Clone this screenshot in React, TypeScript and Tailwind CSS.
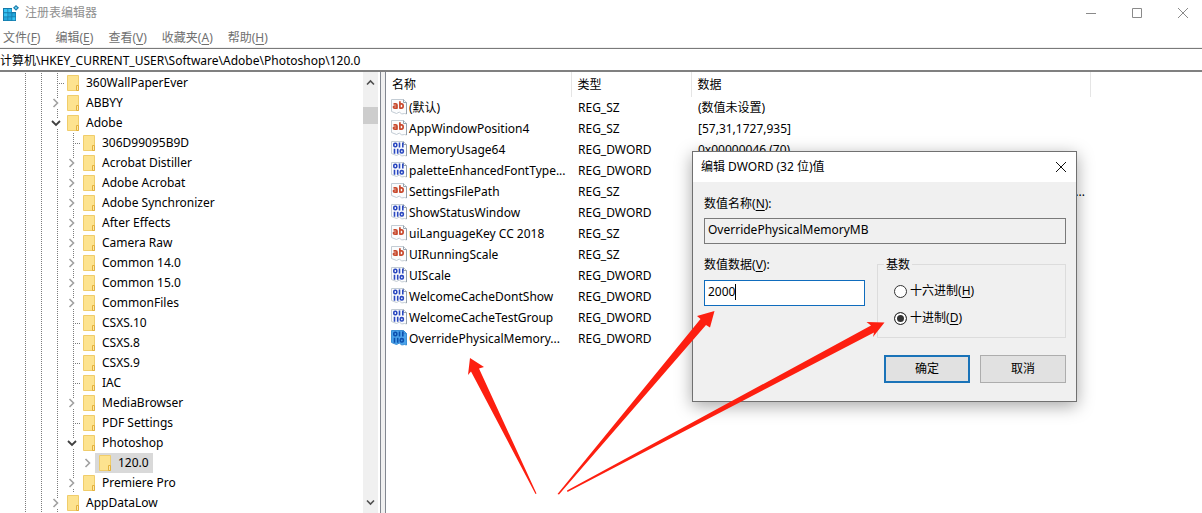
import React, { useState } from 'react';

interface TreeNode {
  label: string;
  depth: number;
  state?: 'open' | 'closed';
  selected?: boolean;
}

interface RegistryValue {
  name: string;
  type: 'REG_SZ' | 'REG_DWORD';
  data: string;
  selected?: boolean;
  clipped?: boolean;
}

const menus = [
  { label: '文件', accessKey: 'F' },
  { label: '编辑', accessKey: 'E' },
  { label: '查看', accessKey: 'V' },
  { label: '收藏夹', accessKey: 'A' },
  { label: '帮助', accessKey: 'H' },
];

const tree: TreeNode[] = [
  { label: '360WallPaperEver', depth: 2 },
  { label: 'ABBYY', depth: 2, state: 'closed' },
  { label: 'Adobe', depth: 2, state: 'open' },
  { label: '306D99095B9D', depth: 3 },
  { label: 'Acrobat Distiller', depth: 3, state: 'closed' },
  { label: 'Adobe Acrobat', depth: 3, state: 'closed' },
  { label: 'Adobe Synchronizer', depth: 3, state: 'closed' },
  { label: 'After Effects', depth: 3, state: 'closed' },
  { label: 'Camera Raw', depth: 3, state: 'closed' },
  { label: 'Common 14.0', depth: 3, state: 'closed' },
  { label: 'Common 15.0', depth: 3, state: 'closed' },
  { label: 'CommonFiles', depth: 3, state: 'closed' },
  { label: 'CSXS.10', depth: 3 },
  { label: 'CSXS.8', depth: 3 },
  { label: 'CSXS.9', depth: 3 },
  { label: 'IAC', depth: 3 },
  { label: 'MediaBrowser', depth: 3, state: 'closed' },
  { label: 'PDF Settings', depth: 3 },
  { label: 'Photoshop', depth: 3, state: 'open' },
  { label: '120.0', depth: 4, state: 'closed', selected: true },
  { label: 'Premiere Pro', depth: 3, state: 'closed' },
  { label: 'AppDataLow', depth: 2, state: 'closed' },
];

const values: RegistryValue[] = [
  { name: '(默认)', type: 'REG_SZ', data: '(数值未设置)' },
  { name: 'AppWindowPosition4', type: 'REG_SZ', data: '[57,31,1727,935]' },
  { name: 'MemoryUsage64', type: 'REG_DWORD', data: '0x00000046 (70)' },
  { name: 'paletteEnhancedFontType...', type: 'REG_DWORD', data: '' },
  { name: 'SettingsFilePath', type: 'REG_SZ', data: '...', clipped: true },
  { name: 'ShowStatusWindow', type: 'REG_DWORD', data: '' },
  { name: 'uiLanguageKey CC 2018', type: 'REG_SZ', data: '' },
  { name: 'UIRunningScale', type: 'REG_SZ', data: '' },
  { name: 'UIScale', type: 'REG_DWORD', data: '' },
  { name: 'WelcomeCacheDontShow', type: 'REG_DWORD', data: '' },
  { name: 'WelcomeCacheTestGroup', type: 'REG_DWORD', data: '' },
  { name: 'OverridePhysicalMemory...', type: 'REG_DWORD', data: '', selected: true },
];

const AppIcon = () => (
  <svg width="16" height="16" viewBox="0 0 16 16" aria-hidden="true">
    <path d="M0 3h9v4h4v9H0z" fill="#1578a8" />
    <path d="M1 4h3.500v3.300H1zM5.200 4h3.300v3.300H5.200zM1 8.200h3.500v3.200H1zM9.300 12.200h3v3h-3z" fill="#35c3f3" />
    <path d="M5.200 8.200h3.300v3.200H5.200zM9.300 8.200h3v3.200h-3zM1 12.200h3.500v3H1zM5.200 12.200h3.300v3H5.200z" fill="#22a7dc" />
    <path d="M13 0l3 2.800-3 3-3-3z" fill="#1b7cab" />
    <path d="M13 1.500l1.300 1.300L13 4.200l-1.400-1.400z" fill="#6fd5f7" />
  </svg>
);

const FolderIcon = () => (
  <svg className="shrink-0" width="14" height="18" viewBox="0 0 14 18" aria-hidden="true">
    <path d="M1.500 1.500h11v15h-11z" fill="#fde38f" stroke="#f0cd6b" />
    <path d="M10.500 11.500h2v5h-2z" fill="#fde9a8" stroke="#e3b13c" />
  </svg>
);

const ValueIcon = ({ type, selected }: { type: RegistryValue['type']; selected?: boolean }) => (
  <svg className="-mt-0.5 shrink-0" width="16" height="16" viewBox="0 0 16 16" aria-hidden="true">
    <path
      d="M.5.5h12l3 3v11.500l-2-.5-3 .5-2-2-3 1.500-5-2z"
      fill={selected ? '#4ba3ea' : '#fbfcfd'}
      stroke={selected ? '#3a8fd6' : '#c3ccd4'}
    />
    <path d="M12.500.5v3h3v11.500" fill="none" stroke={selected ? '#3a8fd6' : '#98a3ad'} />
    {type === 'REG_SZ' ? (
      <g fill="none" stroke="#c8492d" strokeWidth="1.700">
        <path d="M2.500 4.800h2.200c1 0 1.300.5 1.300 1.300v3.700M6 7H3.800C2 7 2 9.200 3.800 9.200H6" />
        <path d="M8.900 2.200v7.600M8.900 4.900h1.600c2.200 0 2.200 4.200 0 4.200H8.900" />
      </g>
    ) : (
      <g fill="none" stroke={selected ? '#0b4fae' : '#2a48c0'} strokeWidth="1.600">
        <rect x="2.800" y="2.300" width="3" height="3.400" rx="1.200" />
        <path d="M8.500 1.500v5M11.800 1.500v5" />
        <path d="M3.500 7.800v5M6.700 7.800v5" />
        <rect x="9.300" y="8.600" width="3" height="3.400" rx="1.200" />
      </g>
    )}
  </svg>
);

const Expander = ({ state }: { state: 'open' | 'closed' }) => (
  <svg width="10" height="10" viewBox="0 0 10 10" fill="none" aria-hidden="true">
    {state === 'open' ? (
      <path d="M1 3l4 4 4-4" stroke="#404040" strokeWidth="1.800" />
    ) : (
      <path d="M2.500 1l4 4-4 4" stroke="#a0a0a0" strokeWidth="1.600" />
    )}
  </svg>
);

const guide = 'h-full w-px bg-[repeating-linear-gradient(to_bottom,#7c7c7c_0_1px,transparent_1px_2px)]';

const TreeRow: React.FC<{ node: TreeNode }> = ({ node }) => (
  <li className="flex h-5 items-center pl-[17px]">
    {Array.from({ length: node.depth }, (_, i) => (
      <span key={i} className="flex h-full w-4 shrink-0 justify-center">
        <span className={guide} />
      </span>
    ))}
    <span className="relative flex h-full w-4 shrink-0 items-center justify-center">
      {node.depth < 4 && <span className={guide} />}
      {node.state ? (
        <button aria-label={node.label} className="absolute right-1 bg-white">
          <Expander state={node.state} />
        </button>
      ) : (
        <span className="absolute right-0 h-px w-2 bg-[repeating-linear-gradient(to_right,#7c7c7c_0_1px,transparent_1px_2px)]" />
      )}
    </span>
    <span className={`-ml-0.5 flex h-full items-center gap-1 pr-0.5 pl-[3px] ${node.selected ? 'bg-[#d9d9d9]' : ''}`}>
      <FolderIcon />
      <span className="px-0.5 whitespace-nowrap">{node.label}</span>
    </span>
  </li>
);

const Underlined = ({ label, accessKey, suffix = '' }: { label: string; accessKey: string; suffix?: string }) => (
  <>
    {label}(<span className="underline underline-offset-2">{accessKey}</span>){suffix}
  </>
);

const EditDialog = () => {
  const [base, setBase] = useState('dec');
  const [value, setValue] = useState('2000');

  const radios = [
    { id: 'hex', label: '十六进制', accessKey: 'H' },
    { id: 'dec', label: '十进制', accessKey: 'D' },
  ];

  return (
    <div
      role="dialog"
      aria-labelledby="dialog-title"
      className="absolute top-[151px] left-[692px] w-[385px] border border-[#707070] bg-[#f0f0f0] shadow-[0_4px_16px_rgba(0,0,0,0.35)]"
    >
      <div className="flex h-[30px] items-center justify-between bg-white pr-2.5 pl-2">
        <h2 id="dialog-title">编辑 DWORD (32 位)值</h2>
        <button aria-label="关闭">
          <svg width="10" height="10" viewBox="0 0 10 10" stroke="#111" aria-hidden="true">
            <path d="M0 0l10 10M10 0L0 10" />
          </svg>
        </button>
      </div>
      <form className="pt-3 pr-2.5 pb-[18px] pl-[11px]" onSubmit={(e) => e.preventDefault()}>
        <label htmlFor="value-name" className="block h-5 leading-5">
          <Underlined label="数值名称" accessKey="N" suffix=":" />
        </label>
        <input
          id="value-name"
          readOnly
          value="OverridePhysicalMemoryMB"
          className="mt-1 block h-[26px] w-full border border-[#7a7a7a] bg-[#f0f0f0] px-[3px] pb-1 outline-none"
        />
        <div className="mt-3 flex gap-3">
          <div className="w-[161px]">
            <label htmlFor="value-data" className="block h-5 leading-[18px]">
              <Underlined label="数值数据" accessKey="V" suffix=":" />
            </label>
            <div className="mt-1 flex h-[26px] items-center border border-[#0f6cbd] bg-white px-[3px] pb-0.5">
              <input
                id="value-data"
                value={value}
                onChange={(e) => setValue(e.target.value)}
                className="field-sizing-content outline-none"
              />
              <span className="h-4 w-px bg-black" />
            </div>
          </div>
          <fieldset className="relative mt-2 flex h-[74px] flex-1 flex-col gap-[7px] border border-[#dcdcdc] pt-4 pl-4">
            <legend className="absolute -top-2.5 left-1.5 bg-[#f0f0f0] px-0.5 leading-5">基数</legend>
            {radios.map((r) => (
              <label key={r.id} className="flex h-5 items-center gap-[3px]">
                <input
                  type="radio"
                  name="base"
                  checked={base === r.id}
                  onChange={() => setBase(r.id)}
                  className="size-[13px] appearance-none rounded-full border border-[#333] bg-white checked:bg-[#333] checked:shadow-[inset_0_0_0_2px_#fff]"
                />
                <span>
                  <Underlined label={r.label} accessKey={r.accessKey} />
                </span>
              </label>
            ))}
          </fieldset>
        </div>
        <div className="mt-[17px] flex justify-end gap-2.5">
          <button type="submit" className="h-7 w-[86px] border-2 border-[#1a73b8] bg-[#e1e1e1]">
            确定
          </button>
          <button type="button" className="h-7 w-[86px] border border-[#adadad] bg-[#e1e1e1]">
            取消
          </button>
        </div>
      </form>
    </div>
  );
};

const Arrows = () => (
  <svg
    className="pointer-events-none absolute top-0 left-0"
    width="900"
    height="513"
    viewBox="0 0 900 513"
    fill="#fd1f10"
    aria-hidden="true"
  >
    <path d="M470 358l14 9-5 1.500L536.500 493.500l-1 .5L471 371.500l-3 3.500z" />
    <path d="M714.500 311l-4.500 16.500-4-2.500L559 494.500l-1.500-.5L700.500 319l-3.500-3z" />
    <path d="M884.500 322.500l-11.500 14.500 1-4.500L567.500 492l-.5-1.500L871 325.500l-4.500-3.500z" />
  </svg>
);

export default function App() {
  return (
    <div className="relative flex h-screen w-full flex-col overflow-hidden bg-white font-['Noto_Sans','Noto_Sans_CJK_SC',sans-serif] text-xs text-black">
      <header className="flex h-[26px] shrink-0 items-center gap-1.5 pr-3.5 pl-[3px] text-[#8f8f8f]">
        <AppIcon />
        <h1 className="flex-1">注册表编辑器</h1>
        <div className="flex items-center gap-9">
          <button aria-label="最小化">
            <svg width="10" height="10" viewBox="0 0 10 10" stroke="#8a8a8a" aria-hidden="true">
              <path d="M0 5.500h10" />
            </svg>
          </button>
          <button aria-label="最大化">
            <svg width="10" height="10" viewBox="0 0 10 10" fill="none" stroke="#8a8a8a" aria-hidden="true">
              <path d="M.5.5h9v9h-9z" />
            </svg>
          </button>
          <button aria-label="关闭">
            <svg width="10" height="10" viewBox="0 0 10 10" stroke="#8a8a8a" aria-hidden="true">
              <path d="M0 0l10 10M10 0L0 10" />
            </svg>
          </button>
        </div>
      </header>
      <nav className="flex h-[22px] shrink-0 items-center gap-[15px] border-b border-[#f0f0f0] pt-0.5 pl-[3px] text-[#707070]">
        {menus.map((m) => (
          <button key={m.accessKey}>
            <Underlined label={m.label} accessKey={m.accessKey} />
          </button>
        ))}
      </nav>
      <input
        aria-label="地址"
        defaultValue="计算机\HKEY_CURRENT_USER\Software\Adobe\Photoshop\120.0"
        className="h-6 w-full shrink-0 border-t border-b-2 border-t-[#7a7a7a] border-b-[#808080] outline-none"
      />
      <main className="flex min-h-0 flex-1">
        <div className="flex w-[381px] shrink-0 border-r border-[#828790]">
          <ul className="flex-1 overflow-hidden pt-px">
            {tree.map((node) => (
              <TreeRow key={node.label} node={node} />
            ))}
          </ul>
          <div className="mr-0.5 flex w-[15px] flex-col items-center justify-between bg-[#f0f0f0] py-1.5">
            <svg width="9" height="9" viewBox="0 0 9 9" fill="none" stroke="#505050" strokeWidth="1.600" aria-hidden="true">
              <path d="M1 6.500L4.500 3 8 6.500" />
            </svg>
            <div className="mt-5 mb-auto h-[17px] w-full bg-[#cdcdcd]" />
            <svg width="9" height="9" viewBox="0 0 9 9" fill="none" stroke="#505050" strokeWidth="1.600" aria-hidden="true">
              <path d="M1 2.500L4.500 6 8 2.500" />
            </svg>
          </div>
        </div>
        <div className="w-1 shrink-0 bg-[#f0f0f0]" />
        <div className="min-w-0 flex-1 border-l border-[#828790]">
          <table className="w-full table-fixed border-collapse">
            <thead>
              <tr className="h-[25px] text-left">
                <th className="w-[185px] border-r border-[#e5e5e5] p-0 pl-1.5 font-normal">名称</th>
                <th className="w-[120px] border-r border-[#e5e5e5] p-0 pl-1.5 font-normal">类型</th>
                <th className="w-[399px] border-r border-[#e5e5e5] p-0 pl-1.5 font-normal">数据</th>
                <th aria-hidden="true" />
              </tr>
            </thead>
            <tbody>
              {values.map((v) => (
                <tr key={v.name} className="h-[21px]">
                  <td className="p-0 pl-[5px]">
                    <span className="flex items-center gap-0.5 whitespace-nowrap">
                      <ValueIcon type={v.type} selected={v.selected} />
                      {v.name}
                    </span>
                  </td>
                  <td className="p-0 pl-[7px]">{v.type}</td>
                  <td className={`p-0 ${v.clipped ? 'pr-[5px] text-right' : 'pl-[7px]'}`}>{v.data}</td>
                  <td />
                </tr>
              ))}
            </tbody>
          </table>
        </div>
      </main>
      <EditDialog />
      <Arrows />
    </div>
  );
}
